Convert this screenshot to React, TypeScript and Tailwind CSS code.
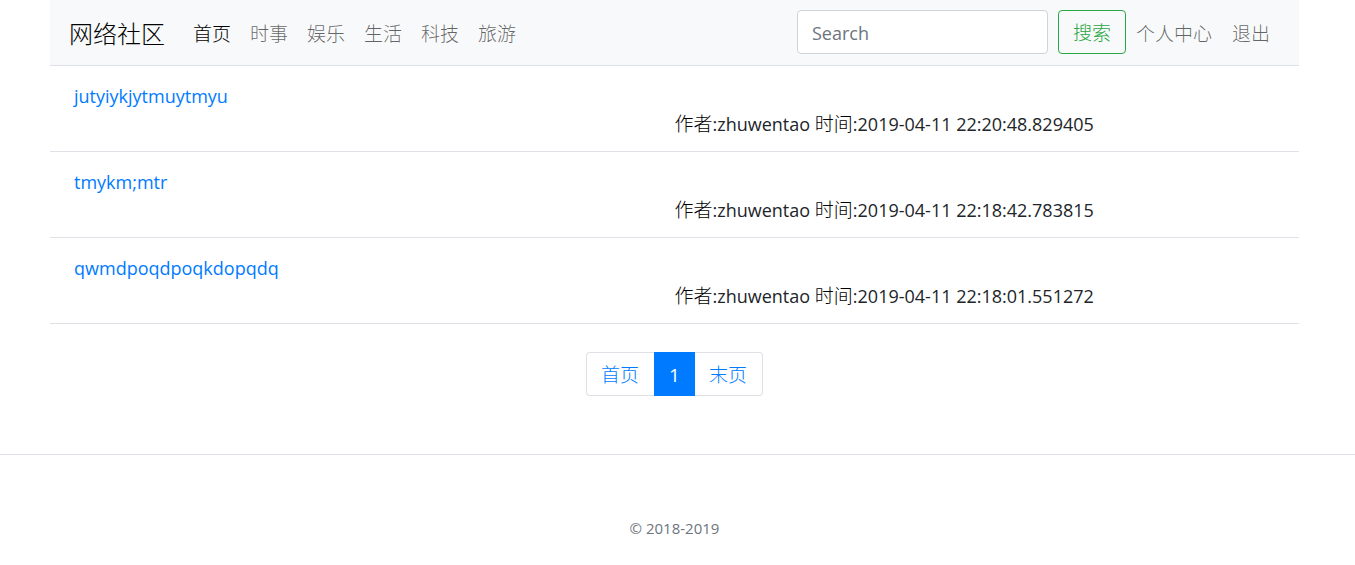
const categories = ["时事", "娱乐", "生活", "科技", "旅游"];

const posts = [
  { title: "jutyiykjytmuytmyu", author: "zhuwentao", time: "2019-04-11 22:20:48.829405" },
  { title: "tmykm;mtr", author: "zhuwentao", time: "2019-04-11 22:18:42.783815" },
  { title: "qwmdpoqdpoqkdopqdq", author: "zhuwentao", time: "2019-04-11 22:18:01.551272" },
];

function Navbar() {
  return (
    <nav className="flex items-center bg-[#f8f9fa] px-[19px] pt-2.5 pb-[11px] font-light">
      <a href="#" className="mr-7 pt-1 text-2xl text-black">网络社区</a>
      <ul className="flex gap-[19px] pt-1">
        <li>
          <a href="#" className="block text-black">首页</a>
        </li>
        {categories.map((name) => (
          <li key={name}>
            <a href="#" className="block text-black/60">{name}</a>
          </li>
        ))}
      </ul>
      <form className="ml-auto flex gap-2.5" onSubmit={(e) => e.preventDefault()}>
        <input
          type="search"
          aria-label="Search"
          placeholder="Search"
          className="h-11 w-[251px] rounded border border-[#ced4da] bg-white px-3.5 pt-0.5 text-lg font-normal placeholder:text-[#6c757d]"
        />
        <button type="submit" className="h-11 rounded border border-[#28a745] px-3.5 pt-0.5 text-[#28a745]">
          搜索
        </button>
      </form>
      <a href="#" className="px-2.5 pt-1 text-black/60">个人中心</a>
      <a href="#" className="px-2.5 pt-1 text-black/60">退出</a>
    </nav>
  );
}

export default function App() {
  return (
    <div className="bg-white font-['Open_Sans','Noto_Sans_CJK_SC',sans-serif] text-[19px] leading-7 text-[#212529]">
      <div className="mr-14 ml-[50px]">
        <Navbar />
        <main>
          {posts.map((post) => (
            <article key={post.title} className="border-t border-[#dee2e6] px-6 pt-4 pb-[13px] text-lg leading-7">
              <h2>
                <a href="#" className="text-[#007bff]">{post.title}</a>
              </h2>
              <p className="ml-[50%]">
                <span className="text-[19px] leading-none font-light text-black">作者</span>:{post.author}{" "}
                <span className="text-[19px] leading-none font-light text-black">时间</span>:{post.time}
              </p>
            </article>
          ))}
          <div className="flex justify-center border-t border-[#dee2e6] pt-7">
            <ul className="flex font-light text-[#007bff]">
              <li>
                <a href="#" className="block rounded-l border border-r-0 border-[#dee2e6] pt-2 pr-[15px] pb-1.5 pl-3.5">首页</a>
              </li>
              <li>
                <a href="#" aria-current="page" className="block border border-[#007bff] bg-[#007bff] px-3.5 pt-2 pb-1.5 font-normal text-white">1</a>
              </li>
              <li>
                <a href="#" className="block rounded-r border border-l-0 border-[#dee2e6] pt-2 pr-[15px] pb-1.5 pl-3.5">末页</a>
              </li>
            </ul>
          </div>
        </main>
      </div>
      <footer className="mt-[58px] border-t border-[#dee2e6] pt-[59px] pb-4 text-[15px] leading-7 text-[#6c757d]">
        <p className="mr-14 ml-[50px] text-center">© 2018-2019</p>
      </footer>
    </div>
  );
}
